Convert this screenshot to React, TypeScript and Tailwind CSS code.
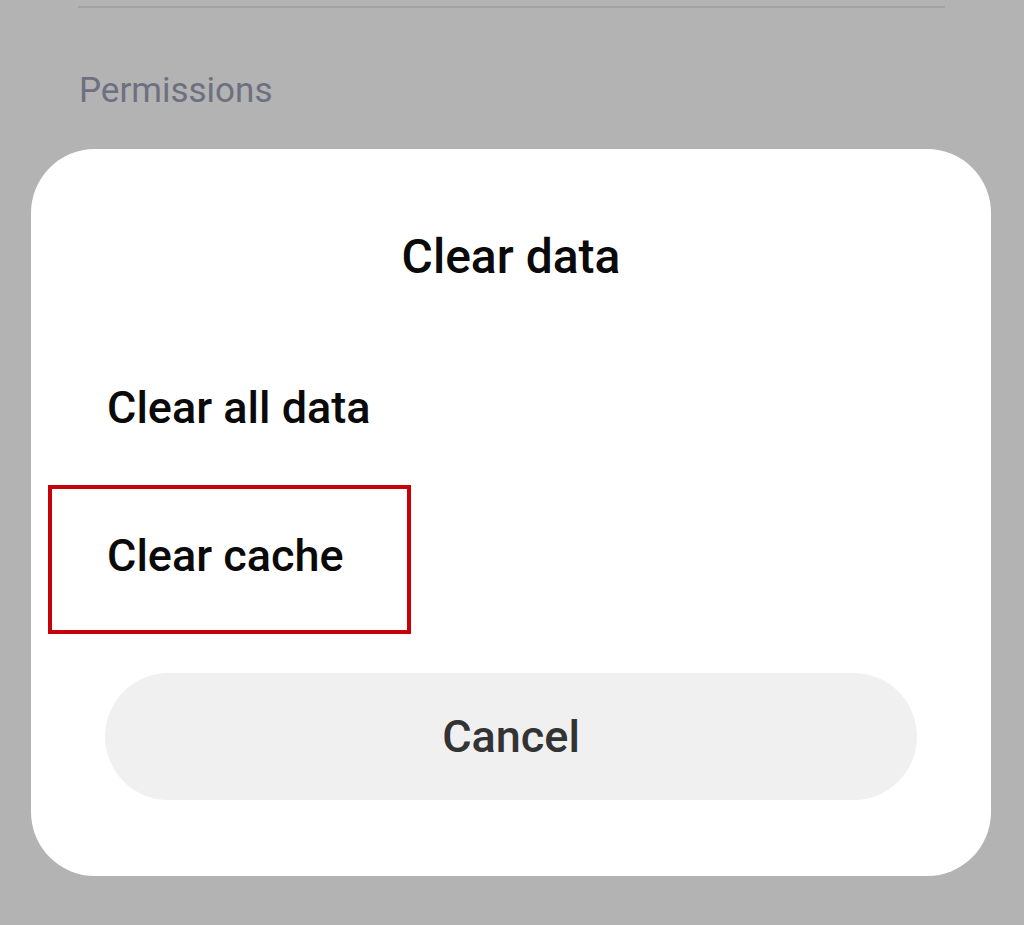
export default function App() {
  return (
    <div className="w-[1024px] h-[925px] bg-[#b3b3b3] overflow-hidden relative" style={{ fontFamily: "Roboto, 'Noto Sans', sans-serif" }}>
      <div className="pt-[6px] pl-[78px] pr-[79px]">
        <div className="h-[2px] bg-[#a3a3a3]" />
      </div>
      <div className="pl-[79px] mt-[63px] text-[35px] leading-[40px] text-[#6d7080]">Permissions</div>
      <div className="relative ml-[31px] mt-[38px] w-[960px] h-[727px] bg-white rounded-[64px]">
        <div className="pt-[80px] text-center text-[48px] leading-[56px] font-medium text-[#0a0a0a]">Clear data</div>
        <div className="pl-[76px] mt-[97px] text-[45px] leading-[52px] font-medium text-[#0a0a0a]">Clear all data</div>
        <div className="pl-[76px] mt-[96px] text-[45px] leading-[52px] font-medium text-[#0a0a0a]">Clear cache</div>
        <div className="mx-[74px] mt-[91px] h-[127px] rounded-full bg-[#f0f0f0] flex items-center justify-center text-[45px] font-medium text-[#333333]">Cancel</div>
        <div className="absolute left-[17px] top-[336px] w-[363px] h-[149px] border-[4px] border-[#c8000a]" />
      </div>
    </div>
  );
}
